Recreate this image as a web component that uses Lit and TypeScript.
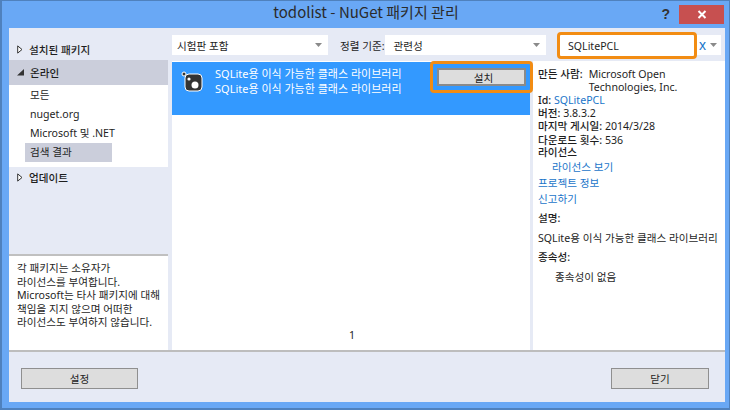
import { LitElement, html, css } from 'lit';
import { customElement } from 'lit/decorators.js';

const caret = html`<svg class="caret" width="7" height="4" viewBox="0 0 7 4"><path d="M0 0h7L3.5 4z" fill="#8a8a8a" /></svg>`;
const closedArrow = html`<svg class="tree-arrow" width="6" height="9" viewBox="0 0 6 9"><path d="M.7.9 5 4.5.7 8.1z" fill="#fff" stroke="#333" /></svg>`;

@customElement('app-root')
export class AppRoot extends LitElement {
  static styles = css`
    :host {
      display: block;
      width: 730px;
      height: 411px;
      overflow: hidden;
      font-family: "Noto Sans", "Noto Sans CJK KR", sans-serif;
      font-size: 10.6px;
      color: #1e1e1e;
      background: #fff;
    }
    .window {
      box-sizing: border-box;
      width: 730px;
      height: 410px;
      background: #69a8f5;
      border: 1px solid #4f81bd;
      border-left-width: 2px;
      border-bottom-width: 2px;
      display: flex;
      flex-direction: column;
      padding: 0 4px 6px 7px;
    }
    .titlebar {
      height: 27px;
      flex: none;
      display: flex;
      align-items: center;
      position: relative;
      justify-content: center;
      font-size: 15px;
      color: #2b2b2b;
      font-family: "Noto Sans CJK KR", sans-serif;
    }
    .title { margin-right: 2px; margin-top: -6px; }
    .help {
      position: absolute;
      right: 55px;
      top: 5px;
      font: bold 14px "Liberation Sans", sans-serif;
      color: #333;
    }
    .close {
      position: absolute;
      right: 1px;
      top: 4px;
      width: 45px;
      height: 19px;
      background: #c75050;
      display: flex;
      align-items: center;
      justify-content: center;
    }
    .body {
      flex: 1;
      background: #e6eaf5;
      display: flex;
      flex-direction: column;
      min-height: 0;
    }
    .main {
      flex: 1;
      display: flex;
      min-height: 0;
      border-bottom: 2px solid #bdbdbd;
    }
    .left {
      width: 159px;
      flex: none;
      display: flex;
      flex-direction: column;
    }
    .tree-row {
      height: 25px;
      display: flex;
      align-items: center;
      gap: 6px;
      padding-left: 8px;
      font-weight: 500;
    }
    .tree-arrow { flex: none; }
    .tree-top { margin-top: 11px; height: 21px; }
    .tree-row.open { background: #cbcedb; }
    .tree-list {
      background: #fff;
      height: 82px;
      box-sizing: border-box;
      padding: 0 0 5px 16px;
      display: flex;
      flex-direction: column;
      justify-content: flex-end;
    }
    .tree-item {
      height: 19px;
      line-height: 18px;
      padding-left: 5px;
      width: 87px;
      box-sizing: border-box;
      white-space: nowrap;
    }
    .tree-item.selected { background: #cbcedb; }
    .updates { height: 20px; }
    .note {
      margin-top: auto;
      height: 96px;
      box-sizing: border-box;
      background: #fff;
      border-top: 2px solid #c0c0c0;
      padding: 6px 0 0 8px;
      line-height: 13.5px;
      white-space: nowrap;
    }
    .center {
      width: 358px;
      flex: none;
      margin-left: 4px;
      display: flex;
      flex-direction: column;
    }
    .toolbar {
      height: 33px;
      flex: none;
      display: flex;
      align-items: center;
      padding-top: 1px;
      box-sizing: border-box;
    }
    .select {
      height: 20px;
      background: #fff;
      display: flex;
      align-items: center;
      justify-content: space-between;
      box-sizing: border-box;
      padding: 0 6px 0 5px;
      flex: none;
    }
    .sort-type { width: 156px; }
    .sort-label { margin-left: 12px; width: 50px; white-space: nowrap; }
    .sort-by { width: 161px; padding-left: 9px; }
    .caret { flex: none; }
    .list {
      flex: 1;
      background: #fff;
      display: flex;
      flex-direction: column;
    }
    .package {
      margin-top: 1px;
      height: 53px;
      background: #3399ff;
      color: #fff;
      display: flex;
      box-sizing: border-box;
      padding: 4px 0 0 9px;
      position: relative;
    }
    .pkg-icon { flex: none; margin-top: 4px; }
    .pkg-text {
      margin-left: 12px;
      line-height: 15px;
      font-size: 11px;
      white-space: nowrap;
      flex: 1;
    }
    .install-ring {
      position: absolute;
      left: 258px;
      top: -1px;
      width: 103px;
      box-sizing: border-box;
      height: 32px;
      border: 3px solid #f28c13;
      border-radius: 4px;
      padding: 4px;
      background: #3399ff;
    }
    .btn {
      background: #dddddd;
      border: 1px solid #8f8f8f;
      display: flex;
      align-items: center;
      justify-content: center;
      box-sizing: border-box;
      color: #1e1e1e;
    }
    .install-ring .btn {
      width: 100%;
      height: 100%;
      border-width: 2px;
      border-color: #8a8a8a;
      padding-left: 4px;
    }
    .pager {
      margin-top: auto;
      height: 25px;
      text-align: center;
      line-height: 20px;
      padding-left: 2px;
    }
    .right {
      flex: 1;
      margin-left: 3px;
      display: flex;
      flex-direction: column;
      position: relative;
    }
    .search-row {
      height: 33px;
      flex: none;
      position: relative;
      display: flex;
      align-items: center;
      justify-content: flex-end;
      padding-top: 1px;
      box-sizing: border-box;
    }
    .search-tail {
      width: 25px;
      height: 20px;
      background: #fff;
      display: flex;
      align-items: center;
      gap: 4px;
      padding-left: 3px;
      box-sizing: border-box;
      margin-right: 4px;
      color: #1a75c9;
      font: 14px "Liberation Sans", sans-serif;
    }
    .search {
      position: absolute;
      left: 24px;
      top: 4px;
      width: 140px;
      height: 27px;
      box-sizing: border-box;
      border: 3px solid #f28c13;
      border-radius: 4px;
      background: #fff;
      display: flex;
      align-items: center;
      padding-left: 8px;
    }
    .details {
      flex: 1;
      background: #fff;
      box-sizing: border-box;
      padding: 7px 0 0 5px;
      line-height: 13px;
      white-space: nowrap;
    }
    .details b { font-weight: 500; }
    .link { color: #1a75c9; }
    .author { display: flex; gap: 6px; }
    .downloads { margin-top: 1px; }
    .license { margin-top: -1px; }
    .indent { padding-left: 14px; margin-top: 2px; }
    .gap { margin-top: 3px; }
    .section { margin-top: 6px; }
    .description { margin-top: 7px; }
    .dep { padding-left: 17px; margin-top: 7px; }
    .footer {
      height: 50px;
      flex: none;
      display: flex;
      align-items: center;
      justify-content: space-between;
      padding: 3px 16px 0 12px;
      box-sizing: border-box;
    }
    .footer .btn { width: 117px; height: 21px; }
    .footer .close-btn { width: 98px; }
  `;

  render() {
    return html`
      <div class="window">
        <div class="titlebar">
          <span class="title">todolist - NuGet 패키지 관리</span>
          <span class="help">?</span>
          <div class="close">
            <svg width="10" height="9" viewBox="0 0 10 9"><path d="M1.5 1 8.5 8M8.5 1 1.5 8" stroke="#fff" stroke-width="2" /></svg>
          </div>
        </div>
        <div class="body">
          <div class="main">
            <div class="left">
              <div class="tree-row tree-top">${closedArrow}<span>설치된 패키지</span></div>
              <div class="tree-row open">
                <svg class="tree-arrow" width="7" height="7" viewBox="0 0 7 7"><path d="M7 0v6.5H0z" fill="#333" /></svg>
                <span>온라인</span>
              </div>
              <div class="tree-list">
                <div class="tree-item">모든</div>
                <div class="tree-item">nuget.org</div>
                <div class="tree-item">Microsoft 및 .NET</div>
                <div class="tree-item selected">검색 결과</div>
              </div>
              <div class="tree-row updates">${closedArrow}<span>업데이트</span></div>
              <div class="note">
                각 패키지는 소유자가<br />라이선스를 부여합니다.<br />Microsoft는 타사 패키지에 대해<br />책임을 지지 않으며 어떠한<br />라이선스도 부여하지 않습니다.
              </div>
            </div>
            <div class="center">
              <div class="toolbar">
                <div class="select sort-type"><span>시험판 포함</span>${caret}</div>
                <span class="sort-label">정렬 기준:</span>
                <div class="select sort-by"><span>관련성</span>${caret}</div>
              </div>
              <div class="list">
                <div class="package">
                  <svg class="pkg-icon" width="22" height="22" viewBox="0 0 22 22">
                    <rect x="4" y="4" width="17" height="17" rx="4" fill="#333" stroke="#fff" />
                    <circle cx="3" cy="4" r="2" fill="#333" stroke="#fff" />
                    <circle cx="14" cy="15" r="3.5" fill="#fff" />
                    <circle cx="8" cy="9" r="1.6" fill="#fff" />
                  </svg>
                  <div class="pkg-text">
                    <div>SQLite용 이식 가능한 클래스 라이브러리</div>
                    <div>SQLite용 이식 가능한 클래스 라이브러리</div>
                  </div>
                  <div class="install-ring"><div class="btn">설치</div></div>
                </div>
                <div class="pager">1</div>
              </div>
            </div>
            <div class="right">
              <div class="search-row">
                <div class="search">SQLitePCL</div>
                <div class="search-tail"><span>x</span>${caret}</div>
              </div>
              <div class="details">
                <div class="author"><b>만든 사람:</b><span>Microsoft Open<br />Technologies, Inc.</span></div>
                <div><b>Id:</b> <span class="link">SQLitePCL</span></div>
                <div><b>버전:</b> 3.8.3.2</div>
                <div><b>마지막 게시일:</b> 2014/3/28</div>
                <div class="downloads"><b>다운로드 횟수:</b> 536</div>
                <div class="license"><b>라이선스</b></div>
                <div class="indent link">라이선스 보기</div>
                <div class="gap link">프로젝트 정보</div>
                <div class="gap link">신고하기</div>
                <div class="section"><b>설명:</b></div>
                <div class="description">SQLite용 이식 가능한 클래스 라이브러리</div>
                <div class="section"><b>종속성:</b></div>
                <div class="dep">종속성이 없음</div>
              </div>
            </div>
          </div>
          <div class="footer">
            <div class="btn">설정</div>
            <div class="btn close-btn">닫기</div>
          </div>
        </div>
      </div>
    `;
  }
}
